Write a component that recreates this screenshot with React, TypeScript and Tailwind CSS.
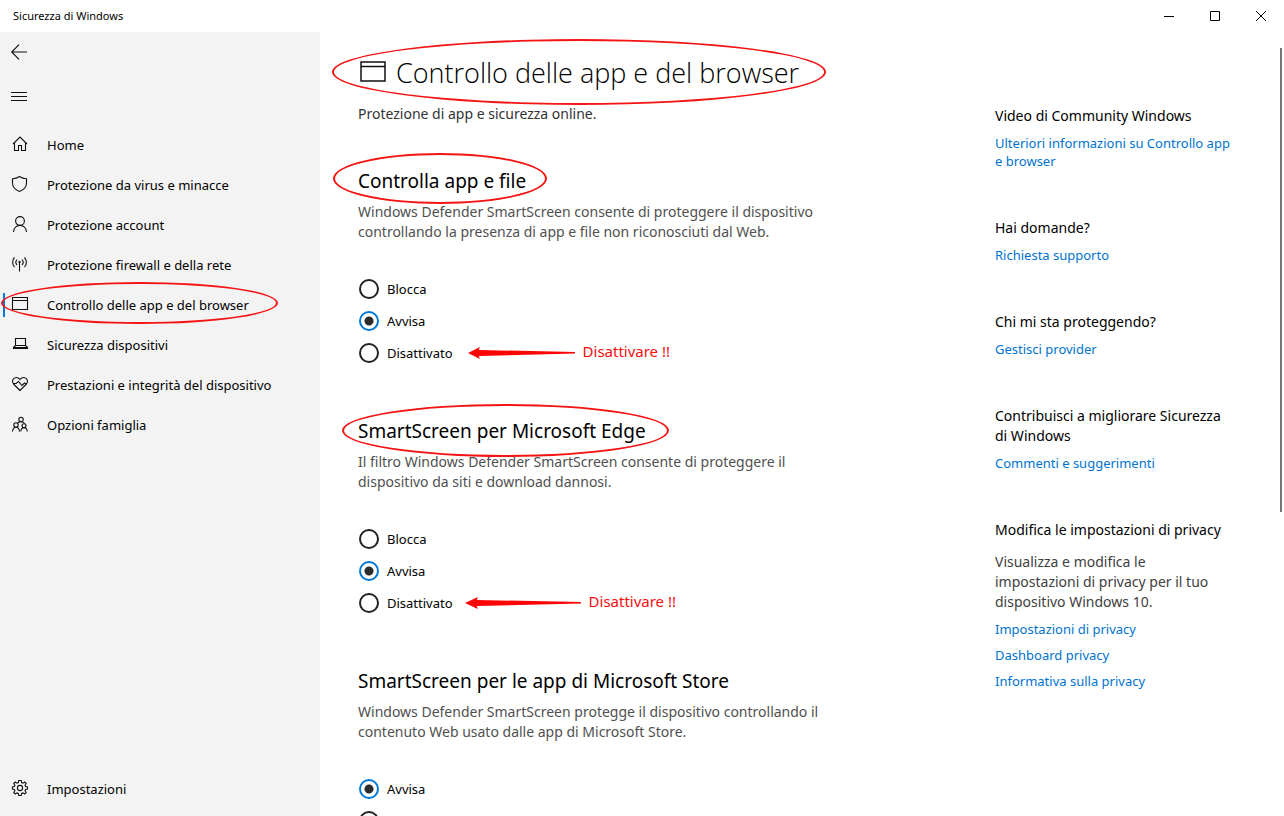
import { useState, ReactNode } from 'react';
import { clsx } from 'clsx';

interface NavItem {
  id: string;
  label: string;
  icon: ReactNode;
}

interface SectionProps {
  id: string;
  title: string;
  text: string;
  options: string[];
  initial: string;
  mark?: ReactNode;
  hint?: ReactNode;
}

const navItems: NavItem[] = [
  { id: 'home', label: 'Home', icon: <path d="M1 8 8 1l7 7M2.500 6.500v8h4v-5h3v5h4v-8" /> },
  { id: 'virus', label: 'Protezione da virus e minacce', icon: <path d="M7.500 .500C5.500 2 3 2.700 .500 2.700V7c0 4 2.700 6.800 7 8.500 4.300-1.700 7-4.500 7-8.500V2.700C12 2.700 9.500 2 7.500 .500Z" /> },
  { id: 'account', label: 'Protezione account', icon: <><circle cx="8" cy="5" r="4.400" /><path d="M1.500 16c.3-4 3-6.600 6.500-6.600s6.200 2.600 6.500 6.600" /></> },
  { id: 'firewall', label: 'Protezione firewall e della rete', icon: <><path d="M7.500 6v9.500M5 3.500C3.700 5 3.700 7.500 5 9M10 3.500c1.300 1.500 1.300 4 0 5.500M2.500 1.500C0 4 0 8.500 2.500 11M12.500 1.500c2.500 2.500 2.500 7 0 9.500" /><circle cx="7.500" cy="6" r=".6" /></> },
  { id: 'browser', label: 'Controllo delle app e del browser', icon: <path d="M.500 1.500h15v12H.500ZM.500 4.500h15" /> },
  { id: 'devices', label: 'Sicurezza dispositivi', icon: <path d="M3.500 2.500h10v7h-10ZM3.500 9.500 1.500 11.500v1h14v-1l-2-2M1.500 11.500h14" /> },
  { id: 'health', label: 'Prestazioni e integrità del dispositivo', icon: <path d="M8 14.500 1.500 8C-.7 5.500 1 1.500 4.300 1.500 6 1.500 7.300 2.500 8 3.500c.7-1 2-2 3.700-2C15 1.500 16.700 5.500 14.500 8ZM1 7.500h3L6.500 5.500l3.500 4 2.500-2.500 1 .5H15" /> },
  { id: 'family', label: 'Opzioni famiglia', icon: <><circle cx="9" cy="3.500" r="2.200" /><circle cx="4" cy="9" r="2.200" /><circle cx="12" cy="9.800" r="2" /><path d="M.500 15.500c.2-2.600 1.500-4.300 3.500-4.300s3.300 1.700 3.500 4.300M8.800 15.500c.2-2.300 1.400-3.700 3.200-3.700s3.100 1.400 3.300 3.700M5.500 7c.8-.8 2-1.300 3.500-1.300 2 0 3.300 1 3.800 2.200" /></> },
];

function Icon({ children, className }: { children: ReactNode; className?: string }) {
  return (
    <svg viewBox="0 0 16 16" className={clsx('size-4 shrink-0 overflow-visible', className)} fill="none" stroke="#111" strokeWidth="1.1" aria-hidden="true">
      {children}
    </svg>
  );
}

// Red ring drawn by hand around the items to look at
function Ring({ className }: { className: string }) {
  return <span className={clsx('pointer-events-none absolute rounded-[50%] border-2 border-[#f51414]', className)} />;
}

function Hint({ className, arrow }: { className: string; arrow: string }) {
  return (
    <span className={clsx('flex items-center gap-2 text-[15px] leading-5 text-[#f80d0d]', className)}>
      <svg viewBox="0 0 108 12" preserveAspectRatio="none" className={clsx('h-3', arrow)} fill="#fb0404" aria-hidden="true">
        <path d="M0 6 12 0 11 3 108 5v1.500L11 9 12 12Z" />
      </svg>
      <span className="pb-1">Disattivare !!</span>
    </span>
  );
}

function Section({ id, title, text, options, initial, mark, hint }: SectionProps) {
  const [value, setValue] = useState(initial);

  return (
    <section className="mb-12">
      <h2 id={id} className="relative text-[19px] leading-7 text-black">
        {title}
        {mark}
      </h2>
      <p className="mt-[7px] max-w-[480px] text-sm leading-5 text-[#505050]">{text}</p>
      <div role="radiogroup" aria-labelledby={id} className="mt-[31px] pl-px">
        {options.map(option => (
          <div key={option} className="flex h-8 items-center">
            <label className="flex items-center gap-2 text-[13px] leading-5 text-black">
              <input
                type="radio"
                name={id}
                checked={value === option}
                onChange={() => setValue(option)}
                className="size-5 appearance-none rounded-full border-2 border-[#222] checked:border-[#0078d7] checked:bg-[radial-gradient(circle,#2b2b2b_4px,transparent_5px)]"
              />
              {option}
            </label>
            {option === 'Disattivato' && hint}
          </div>
        ))}
      </div>
    </section>
  );
}

function HelpGroup({ title, text, links }: { title: string; text?: string; links: string[] }) {
  return (
    <section className="mb-12">
      <h3 className="text-sm leading-5 text-black">{title}</h3>
      {text && <p className="mt-3 max-w-[230px] text-sm leading-5 text-[#404040]">{text}</p>}
      <ul>
        {links.map(link => (
          <li key={link} className="mt-2 text-[13px] leading-[18px]">
            <a href="#" className="block text-[#0073cf] hover:text-gray-500">{link}</a>
          </li>
        ))}
      </ul>
    </section>
  );
}

function TitleBar() {
  return (
    <header className="flex h-8 shrink-0 items-center justify-between bg-white pl-[13px]">
      <span className="text-[11px] text-black">Sicurezza di Windows</span>
      <div className="flex">
        <button aria-label="Riduci a icona" className="flex h-8 w-[46px] items-center justify-center hover:bg-gray-200">
          <svg viewBox="0 0 10 10" className="size-[10px]" stroke="#000"><path d="M0 5.500h10" /></svg>
        </button>
        <button aria-label="Ingrandisci" className="flex h-8 w-[46px] items-center justify-center hover:bg-gray-200">
          <svg viewBox="0 0 10 10" className="size-[10px]" fill="none" stroke="#000"><path d="M.500 .500h9v9h-9Z" /></svg>
        </button>
        <button aria-label="Chiudi" className="flex h-8 w-[46px] items-center justify-center hover:bg-red-500">
          <svg viewBox="0 0 10 10" className="size-[10px]" stroke="#000"><path d="m0 0 10 10M10 0 0 10" /></svg>
        </button>
      </div>
    </header>
  );
}

function Sidebar() {
  const [active, setActive] = useState('browser');

  return (
    <aside className="flex w-80 shrink-0 flex-col bg-[#f3f3f3] pb-[7px]">
      <button aria-label="Indietro" className="flex h-10 w-12 items-center pl-[11px]">
        <Icon><path d="M16 8H.700M8 .700.700 8 8 15.300" /></Icon>
      </button>
      <button aria-label="Menu" className="flex h-12 w-12 items-center pl-[11px]">
        <Icon><path d="M0 4.500h16M0 8.500h16M0 12.500h16" /></Icon>
      </button>
      <nav className="mt-[5px]">
        {navItems.map(item => (
          <button
            key={item.id}
            onClick={() => setActive(item.id)}
            className="relative flex h-10 w-full items-center gap-[19px] pl-3 text-left text-[13px] leading-5 text-black hover:bg-black/5"
          >
            {active === item.id && <span className="absolute left-[3px] h-6 w-[2px] bg-[#0078d7]" />}
            <Icon className="mb-[2px]">{item.icon}</Icon>
            {item.label}
            {item.id === 'browser' && <Ring className="-top-[3px] left-px h-[42px] w-[277px]" />}
          </button>
        ))}
      </nav>
      <button className="mt-auto flex h-10 items-center gap-[19px] pl-3 text-left text-[13px] leading-5 text-black hover:bg-black/5">
        <Icon className="mb-[2px]">
          <circle cx="8" cy="8" r="2.600" />
          <path d="m6.700.500-.4 2-1.300.6L3.200 2 1.700 3.600l1.200 1.700-.5 1.300-2 .4v2l2 .4.5 1.300-1.200 1.700 1.500 1.600L5 12.900l1.300.6.4 2h2.500l.4-2 1.300-.6 1.800 1.100 1.500-1.600-1.200-1.700.5-1.300 2-.4V7l-2-.4-.5-1.300 1.200-1.700L12.700 2l-1.800 1.100-1.300-.6-.4-2Z" />
        </Icon>
        Impostazioni
      </button>
    </aside>
  );
}

export default function App() {
  return (
    <div className="flex h-screen flex-col overflow-hidden bg-white font-['Noto_Sans','Open_Sans',sans-serif]">
      <TitleBar />
      <div className="flex min-h-0 flex-1">
        <Sidebar />
        <div className="relative flex min-w-0 flex-1 overflow-hidden pl-[38px]">
          <main className="min-w-0 flex-1 pt-[21px]">
            <h1 className="relative flex items-center gap-[10px] font-['Open_Sans',sans-serif] text-[27px] leading-10 text-black">
              <svg viewBox="0 0 26 21" className="mb-1 ml-[2px] h-[21px] w-[26px]" fill="none" stroke="#111" strokeWidth="1.5" aria-hidden="true">
                <path d="M1 1h24v19H1ZM1 5.500h24" />
              </svg>
              <span className="font-light">Controllo delle app e del browser</span>
              <Ring className="-left-[26px] -top-[14px] h-[66px] w-[494px]" />
            </h1>
            <p className="mb-[43px] mt-[11px] text-sm leading-5 text-[#333]">Protezione di app e sicurezza online.</p>

            <Section
              id="files"
              title="Controlla app e file"
              text="Windows Defender SmartScreen consente di proteggere il dispositivo controllando la presenza di app e file non riconosciuti dal Web."
              options={['Blocca', 'Avvisa', 'Disattivato']}
              initial="Avvisa"
              mark={<Ring className="-left-[25px] -top-[14px] h-[51px] w-[214px]" />}
              hint={<Hint className="ml-[15px]" arrow="w-[107px]" />}
            />
            <Section
              id="edge"
              title="SmartScreen per Microsoft Edge"
              text="Il filtro Windows Defender SmartScreen consente di proteggere il dispositivo da siti e download dannosi."
              options={['Blocca', 'Avvisa', 'Disattivato']}
              initial="Avvisa"
              mark={<Ring className="-left-4 -top-[13px] h-[53px] w-[327px]" />}
              hint={<Hint className="ml-3" arrow="w-[116px]" />}
            />
            <Section
              id="store"
              title="SmartScreen per le app di Microsoft Store"
              text="Windows Defender SmartScreen protegge il dispositivo controllando il contenuto Web usato dalle app di Microsoft Store."
              options={['Avvisa', 'Disattivato']}
              initial="Avvisa"
            />
          </main>

          <aside className="w-[289px] shrink-0 pr-12 pt-[74px]">
            <HelpGroup title="Video di Community Windows" links={['Ulteriori informazioni su Controllo app e browser']} />
            <HelpGroup title="Hai domande?" links={['Richiesta supporto']} />
            <HelpGroup title="Chi mi sta proteggendo?" links={['Gestisci provider']} />
            <HelpGroup title="Contribuisci a migliorare Sicurezza di Windows" links={['Commenti e suggerimenti']} />
            <HelpGroup
              title="Modifica le impostazioni di privacy"
              text="Visualizza e modifica le impostazioni di privacy per il tuo dispositivo Windows 10."
              links={['Impostazioni di privacy', 'Dashboard privacy', 'Informativa sulla privacy']}
            />
          </aside>

          {/* Scroll thumb */}
          <div className="absolute right-[2px] top-4 h-[464px] w-[2px] bg-[#767676]" />
        </div>
      </div>
    </div>
  );
}
